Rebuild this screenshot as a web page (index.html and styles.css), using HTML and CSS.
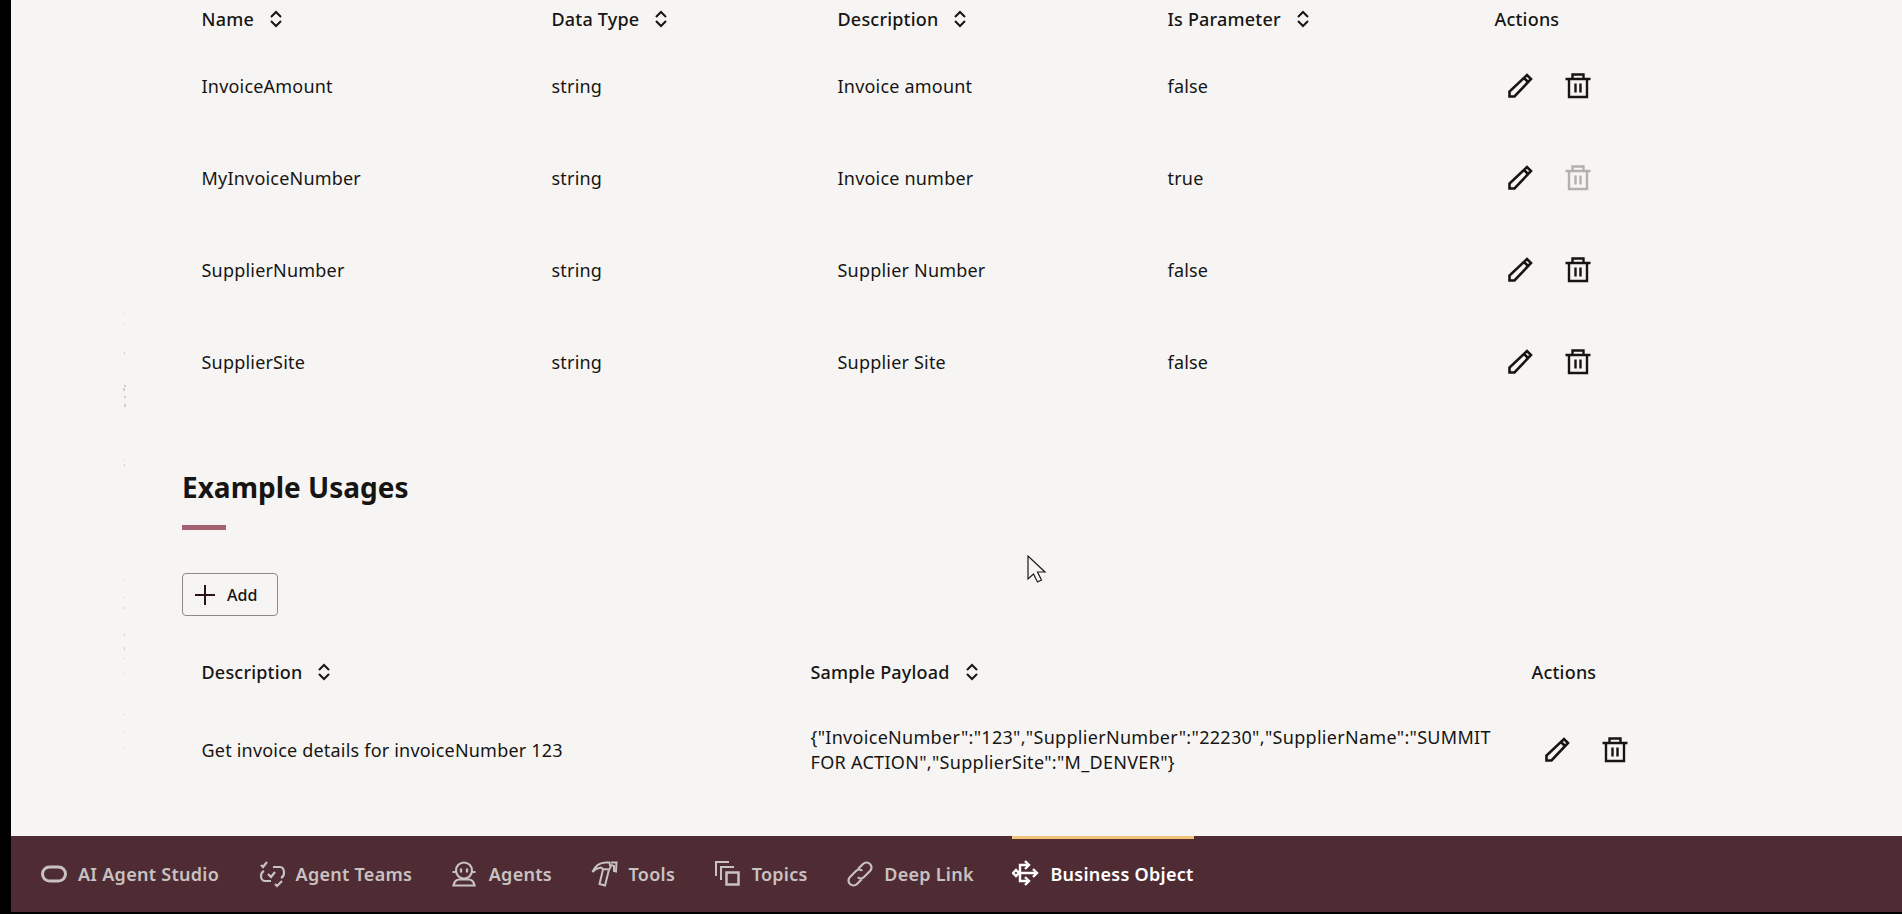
FILE: index.html
```html
<!DOCTYPE html>
<html lang="en">
<head>
<meta charset="utf-8">
<title>Business Object</title>
<link rel="stylesheet" href="styles.css">
</head>
<body>
<svg width="0" height="0" class="defs">
  <symbol id="sort" viewBox="0 0 14 18"><path d="M2 7l5-5 5 5M2 11l5 5 5-5" fill="none" stroke="currentColor" stroke-width="2"/></symbol>
  <symbol id="edit" viewBox="0 0 26 26"><path d="M2.500 23.500V18.500L20 2l4 4L7.500 23.500zM17 5l4 4" fill="none" stroke="currentColor" stroke-width="2.600"/></symbol>
  <symbol id="trash" viewBox="0 0 26 26"><path d="M0.500 6h25M4 6V24h18V6M7.500 6V1.500h11V6M10.500 10.500v9M15.500 10.500v9" fill="none" stroke="currentColor" stroke-width="2.400"/></symbol>
</svg>
<div class="app">
  <main class="content">
    <table class="grid attrs">
      <colgroup><col class="c-name"><col class="c-type"><col class="c-desc"><col class="c-param"><col></colgroup>
      <thead>
        <tr>
          <th><span class="th-in">Name<svg class="sort"><use href="#sort"/></svg></span></th>
          <th><span class="th-in">Data Type<svg class="sort"><use href="#sort"/></svg></span></th>
          <th><span class="th-in">Description<svg class="sort"><use href="#sort"/></svg></span></th>
          <th><span class="th-in">Is Parameter<svg class="sort"><use href="#sort"/></svg></span></th>
          <th>Actions</th>
        </tr>
      </thead>
      <tbody>
        <tr><td>InvoiceAmount</td><td>string</td><td>Invoice amount</td><td>false</td><td><div class="acts"><svg class="ic"><use href="#edit"/></svg><svg class="ic"><use href="#trash"/></svg></div></td></tr>
        <tr><td>MyInvoiceNumber</td><td>string</td><td>Invoice number</td><td>true</td><td><div class="acts"><svg class="ic"><use href="#edit"/></svg><svg class="ic off"><use href="#trash"/></svg></div></td></tr>
        <tr><td>SupplierNumber</td><td>string</td><td>Supplier Number</td><td>false</td><td><div class="acts"><svg class="ic"><use href="#edit"/></svg><svg class="ic"><use href="#trash"/></svg></div></td></tr>
        <tr><td>SupplierSite</td><td>string</td><td>Supplier Site</td><td>false</td><td><div class="acts"><svg class="ic"><use href="#edit"/></svg><svg class="ic"><use href="#trash"/></svg></div></td></tr>
      </tbody>
    </table>

    <section class="usages">
      <h2 class="title">Example Usages</h2>
      <div class="rule"></div>
      <button class="add" type="button"><svg class="plus" viewBox="0 0 20 20"><path d="M10 0v20M0 10h20" stroke="currentColor" stroke-width="2"/></svg>Add</button>
    </section>

    <table class="grid examples">
      <colgroup><col class="e-desc"><col class="e-pay"><col></colgroup>
      <thead>
        <tr>
          <th><span class="th-in">Description<svg class="sort"><use href="#sort"/></svg></span></th>
          <th><span class="th-in">Sample Payload<svg class="sort"><use href="#sort"/></svg></span></th>
          <th>Actions</th>
        </tr>
      </thead>
      <tbody>
        <tr>
          <td>Get invoice details for invoiceNumber 123</td>
          <td class="payload">{"InvoiceNumber":"123","SupplierNumber":"22230","SupplierName":"SUMMIT FOR ACTION","SupplierSite":"M_DENVER"}</td>
          <td><div class="acts"><svg class="ic"><use href="#edit"/></svg><svg class="ic"><use href="#trash"/></svg></div></td>
        </tr>
      </tbody>
    </table>
  </main>

  <nav class="tabs">
    <a class="tab"><svg class="tab-ic" viewBox="0 0 28 28"><rect x="2.500" y="7" width="23" height="14" rx="7" fill="none" stroke="currentColor" stroke-width="3"/></svg>AI Agent Studio</a>
    <a class="tab"><svg class="tab-ic" viewBox="0 0 28 28"><path d="M15 7h7c3 0 4 3 4 6s-1 4-3 5M13 21H7c-3 0-4-3-4-5s1-4 3-5M10 14l3 3 4-5M3 5l2 2 4-5M17 24l2 2 5-5" fill="none" stroke="currentColor" stroke-width="2.200"/></svg>Agent Teams</a>
    <a class="tab"><svg class="tab-ic" viewBox="0 0 28 28"><circle cx="13" cy="10.500" r="8" fill="none" stroke="currentColor" stroke-width="2.200"/><path d="M10 8.500v4M16 8.500v4M1.500 12h3M21.500 12h3M2.500 25.500h21l-1-3c-1-2-3-3-5-3H8.500c-2 0-4 1-5 3z" fill="none" stroke="currentColor" stroke-width="2.200"/></svg>Agents</a>
    <a class="tab"><svg class="tab-ic" viewBox="0 0 28 28"><path d="M1.500 12C4 6 9 2.500 15 2.500h3.500l1 5-1.500 2-6-.5-2-1.500-5 1.500zM12 9.500L8.500 24l5.500 1.500 4-16M20 2.500h5.500l-.5 9-2-.5V6l-3-1" fill="none" stroke="currentColor" stroke-width="2"/></svg>Tools</a>
    <a class="tab"><svg class="tab-ic" viewBox="0 0 28 28"><path d="M2 16V2h13M7 20V7h13" fill="none" stroke="currentColor" stroke-width="2"/><rect x="12.500" y="12.500" width="12" height="12" fill="none" stroke="currentColor" stroke-width="2.500"/></svg>Topics</a>
    <a class="tab"><svg class="tab-ic" viewBox="0 0 28 28"><path d="M12 9l5-5c2-2 5-2 7 0s2 5 0 7l-6 6c-2 2-5 2-6 0M16 19l-5 5c-2 2-5 2-7 0s-2-5 0-7l6-6c2-2 5-2 6 0" fill="none" stroke="currentColor" stroke-width="2.200"/></svg>Deep Link</a>
    <a class="tab on"><svg class="tab-ic" viewBox="0 0 28 28"><path d="M8 13V5h9M13 1l4 4-4 4M8 13v8h9M13 17l4 4-4 4M7 13h18M21 9l4 4-4 4M1 13l3-3 3 3-3 3z" fill="none" stroke="currentColor" stroke-width="2.400"/></svg>Business Object</a>
  </nav>
</div>

<svg class="specks" width="4" height="460" viewBox="0 0 4 460"><path d="M1 0h1v1H1zM1 11h1v1H1zM1 39h1v2H1zM1 72h2v2H1zM0 75h2v3H0zM1 83h2v2H1zM1 91h2v3H1zM1 147h1v1H1zM1 151h1v2H1zM1 267h1v1H1zM1 284h1v1H1zM1 294h1v2H1zM1 321h1v2H1zM1 334h1v3H1zM1 345h1v1H1zM1 360h1v1H1zM1 401h1v1H1zM1 419h1v1H1zM1 434h1v1H1z" fill="#cfcccb"/></svg>
<svg class="cursor" width="20" height="28" viewBox="0 0 20 28"><path d="M1 1v23l5.500-5 4 8 4-2-4-8h7.500z" fill="#f7f5f3" stroke="#1a1a1a" stroke-width="1.200"/></svg>
</body>
</html>
```
FILE: styles.css
```css
* { box-sizing: border-box; }
html, body { margin: 0; height: 100%; overflow: hidden; background: #000; }
body { font-family: "Noto Sans", "Open Sans", sans-serif; font-size: 18px; letter-spacing: 0.2px; color: #161513; }
.defs { position: absolute; }
.app { margin-left: 11px; height: 912px; display: flex; flex-direction: column; background: #f7f5f3; }
.content { flex: 1; min-height: 0; padding-left: 170px; overflow: hidden; }

.grid { border-collapse: collapse; table-layout: fixed; }
.attrs { width: 1660px; }
.c-name { width: 350px; } .c-type { width: 286px; } .c-desc { width: 330px; } .c-param { width: 327px; }
.examples { width: 1700px; margin-top: 37px; }
.e-desc { width: 609px; } .e-pay { width: 721px; }
th { height: 40px; padding: 0 0 2px 20.500px; text-align: left; font-weight: 500; white-space: nowrap; }
td { height: 92px; padding: 0 0 0 20.500px; font-weight: 400; }
.examples td { height: 113px; }
.th-in { display: inline-flex; align-items: center; gap: 15px; }
.sort { width: 14px; height: 18px; }
.payload { line-height: 25px; padding-right: 12px; letter-spacing: 0.3px; }

.acts { display: flex; align-items: center; gap: 32px; padding-left: 12.500px; }
.ic { width: 26px; height: 26px; }
.off { color: #b5b0ae; }

.usages { padding-left: 1px; }
.title { margin: 0; padding-top: 60px; font-size: 28px; line-height: 38px; font-weight: 700; letter-spacing: 0; }
.rule { width: 44px; height: 5px; margin-top: 19px; background: #a3626f; }
.add { display: flex; align-items: center; gap: 12px; width: 96px; height: 43px; margin-top: 43px; padding: 0 0 0 12px; border: 1px solid #8b8886; border-radius: 4px; background: transparent; font: 500 16px "Noto Sans", sans-serif; color: #161513; }
.plus { width: 20px; height: 20px; color: #2a1418; }

.tabs { flex: none; height: 76px; padding: 0 0 0 29px; display: flex; gap: 38.600px; background: #4f2c33; }
.tab { display: flex; align-items: center; gap: 10px; height: 76px; padding-bottom: 4px; font-size: 18px; letter-spacing: 0.27px; font-weight: 600; color: #c9c2c2; border-top: 3px solid transparent; white-space: nowrap; }
.tab-ic { width: 28px; height: 28px; }
.on { color: #fff; border-top-color: #f0c27a; }

.specks { position: absolute; left: 123px; top: 313px; }
.cursor { position: absolute; left: 1027px; top: 555px; }
```
